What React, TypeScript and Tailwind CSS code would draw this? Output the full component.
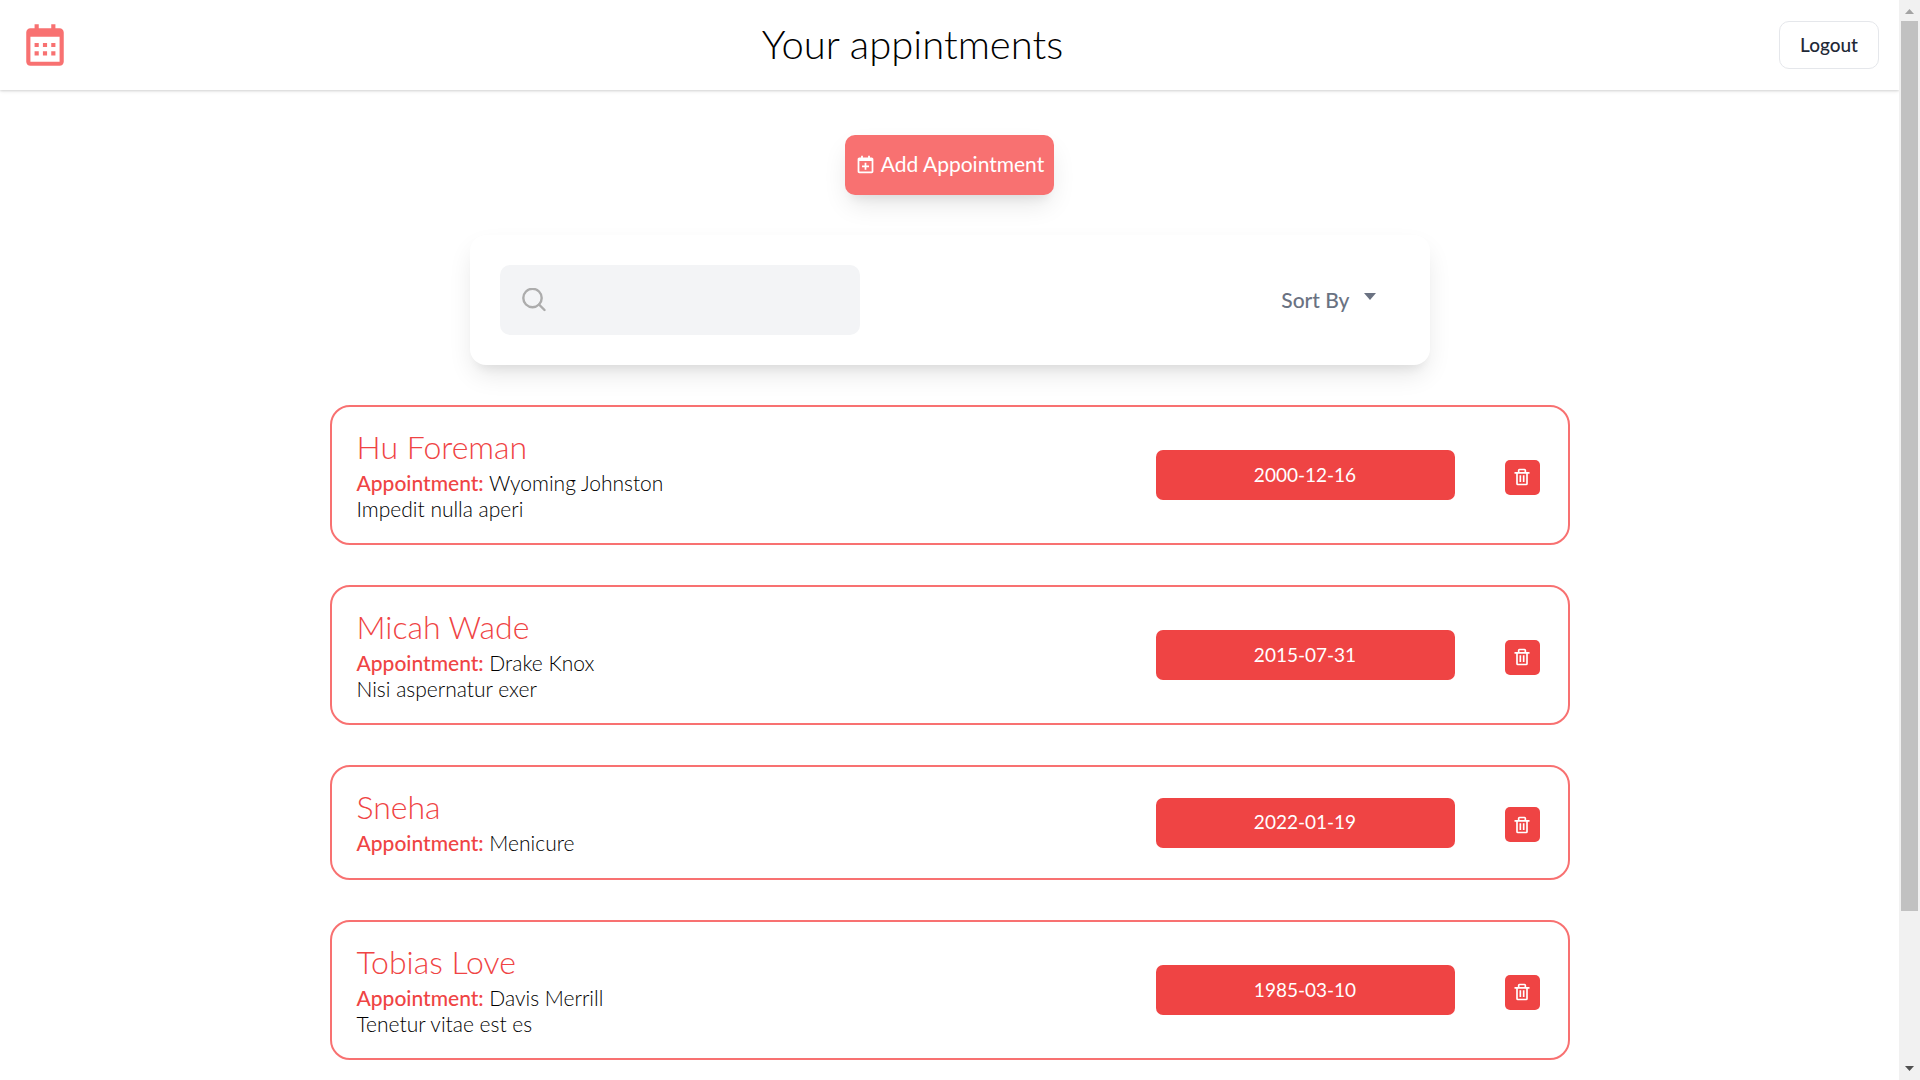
import { BiCalendar, BiCalendarPlus, BiTrash } from "react-icons/bi";

type Appointment = { name: string; reason: string; notes?: string; date: string };

const appointments: Appointment[] = [
  { name: "Hu Foreman", reason: "Wyoming Johnston", notes: "Impedit nulla aperi", date: "2000-12-16" },
  { name: "Micah Wade", reason: "Drake Knox", notes: "Nisi aspernatur exer", date: "2015-07-31" },
  { name: "Sneha", reason: "Menicure", date: "2022-01-19" },
  { name: "Tobias Love", reason: "Davis Merrill", notes: "Tenetur vitae est es", date: "1985-03-10" },
];

function Header() {
  return (
    <header className="flex h-[90px] items-center justify-between px-5 shadow-[0_1px_4px_rgba(0,0,0,0.1),0_1px_2px_rgba(0,0,0,0.1)]">
      <BiCalendar className="-mr-6 size-[50px] text-[#f87171]" aria-hidden="true" />
      <h1 className="pb-0.5 text-[40px] leading-[50px] font-light text-black">Your appintments</h1>
      <button
        type="button"
        className="h-12 w-[100px] rounded-[10px] border border-gray-200 text-[19px] font-medium text-[#1f2937]"
      >
        Logout
      </button>
    </header>
  );
}

function SearchBar() {
  return (
    <section className="mx-auto mt-10 flex w-full max-w-[960px] items-center justify-between rounded-2xl bg-white p-[30px] shadow-[0_12px_27px_-4px_rgba(0,0,0,0.11),0_10px_10px_-6px_rgba(0,0,0,0.06)]">
      <label className="flex h-[70px] w-[360px] items-center rounded-[10px] bg-[#f3f4f6] px-[22px]">
        <svg className="size-6 shrink-0 text-[#acacac]" viewBox="0 0 24 24" fill="none" stroke="currentColor" strokeWidth="2.4" strokeLinecap="round" aria-hidden="true">
          <circle cx="10.5" cy="10" r="9.2" />
          <path d="M17 16.500l5.500 5.500" />
        </svg>
        <input type="text" aria-label="Search appointments" className="ml-3 w-full min-w-0 bg-transparent text-xl outline-none" />
      </label>
      <button type="button" aria-haspopup="menu" className="mr-6 flex items-center gap-3.5 text-[21px] font-medium text-gray-500">
        Sort By
        <svg className="mb-2 h-[7px] w-3" viewBox="0 0 12 7" fill="currentColor" aria-hidden="true">
          <path d="M0 0h12L6 7z" />
        </svg>
      </button>
    </section>
  );
}

function AppointmentCard({ name, reason, notes, date }: Appointment) {
  return (
    <li className="flex items-center rounded-[20px] border-2 border-[#f87171] pt-5 pr-7 pb-[22px] pl-[25px]">
      <div className="flex-1">
        <h2 className="mb-0.5 text-[32px] leading-10 font-light text-[#ef4444]">{name}</h2>
        <p className="text-[21px] leading-[27px] font-light text-black">
          <span className="font-medium text-[#ef4444]">Appointment:</span> {reason}
        </p>
        {notes && <p className="text-[21px] leading-[25px] font-light text-black">{notes}</p>}
      </div>
      <time dateTime={date} className="mt-0.5 mr-[50px] flex h-[50px] w-[299px] items-center justify-center rounded-[7px] bg-[#ef4444] text-[19px] text-white">
        {date}
      </time>
      <button type="button" aria-label={`Delete appointment for ${name}`} className="mt-1.5 flex size-[35px] items-center justify-center rounded-[5px] bg-[#ef4444] text-white">
        <BiTrash className="size-5" />
      </button>
    </li>
  );
}

function ScrollTrack() {
  return (
    <div aria-hidden="true" className="sticky top-0 flex h-screen w-[21px] shrink-0 flex-col items-center bg-[#f1f1f1]">
      <svg className="h-[21px] w-[21px]" viewBox="0 0 21 21" fill="#a3a3a3">
        <path d="M6 14h9L10.500 9z" />
      </svg>
      <div className="w-[17px] flex-[890] bg-[#c1c1c1]" />
      <div className="flex-[148]" />
      <svg className="h-[21px] w-[21px]" viewBox="0 0 21 21" fill="#505050">
        <path d="M6 7h9l-4.500 5z" />
      </svg>
    </div>
  );
}

export default function App() {
  return (
    <div className="flex min-h-screen bg-white font-['Lato','Open_Sans',sans-serif]">
      <div className="min-w-0 flex-1">
        <Header />
        <main className="px-5 pt-[45px] pb-5">
          <button
            type="button"
            className="mx-auto flex h-[60px] items-center justify-center gap-[5px] rounded-[10px] bg-[#f87171] px-2.5 pb-0.5 text-[21px] text-white shadow-[0_12px_27px_-4px_rgba(0,0,0,0.11),0_10px_10px_-6px_rgba(0,0,0,0.06)]"
          >
            <BiCalendarPlus className="size-[21px]" />
            Add Appointment
          </button>
          <SearchBar />
          <ul className="mx-auto mt-10 flex max-w-[1240px] flex-col gap-10">
            {appointments.map((a) => (
              <AppointmentCard key={a.name} {...a} />
            ))}
          </ul>
        </main>
      </div>
      <ScrollTrack />
    </div>
  );
}
